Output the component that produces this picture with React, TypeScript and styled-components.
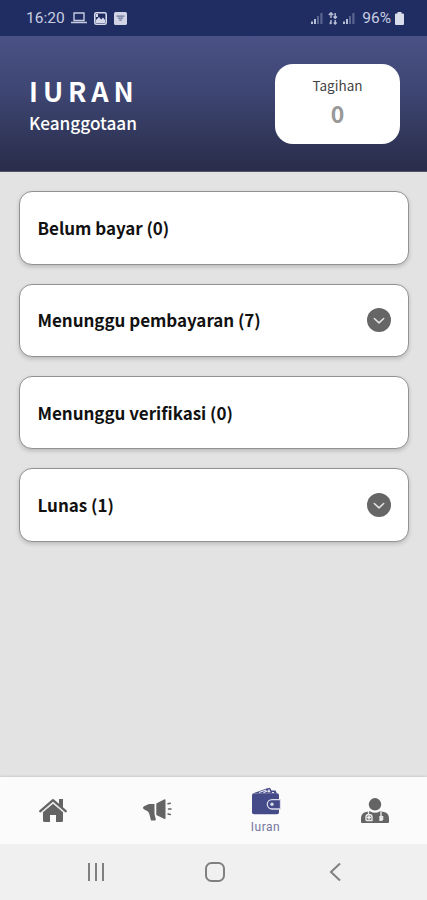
import React from "react";
import styled, { createGlobalStyle } from "styled-components";

const GlobalStyle = createGlobalStyle`
  * { box-sizing: border-box; }
  body { margin: 0; background: #e3e3e3; }
`;

const Screen = styled.div`
  width: 427px;
  height: 900px;
  display: flex;
  flex-direction: column;
  overflow: hidden;
  background: #e3e3e3;
  font-family: "Noto Sans CJK JP", "Noto Sans", sans-serif;
`;

const StatusBar = styled.div`
  height: 36px;
  flex: none;
  display: flex;
  align-items: center;
  justify-content: space-between;
  padding: 0 23px 0 26px;
  background: #202d62;
  color: #c9cde0;
  font: 15.5px/36px Roboto, sans-serif;
`;

const StatusGroup = styled.div<{ $gap: number }>`
  display: flex;
  align-items: center;
  gap: ${(p) => p.$gap}px;
  svg { display: block; }
`;

const Clock = styled.span`
  margin-right: -1px;
`;

const Battery = styled.span`
  margin: 0 -1px 0 2px;
`;

const Header = styled.header`
  height: 136px;
  flex: none;
  display: flex;
  justify-content: space-between;
  padding: 28px 27px 0 29px;
  background: linear-gradient(#4a5186, #3e4673 40%, #292d4a);
  border-bottom: 1px solid #51556b;
`;

const Heading = styled.div`
  color: #fff;
  padding-top: 10px;
`;

const Title = styled.h1`
  margin: 0;
  font-size: 27px;
  line-height: 33px;
  font-weight: 700;
  letter-spacing: 5px;
`;

const Subtitle = styled.div`
  font-size: 17.2px;
  line-height: 26px;
  font-weight: 500;
  margin-top: 3px;
`;

const BillCard = styled.div`
  width: 125px;
  height: 80px;
  border-radius: 18px;
  background: #fff;
  text-align: center;
  padding-top: 11px;
`;

const BillLabel = styled.div`
  font-size: 13.5px;
  line-height: 20px;
  color: #444;
`;

const BillValue = styled.div`
  font-size: 23px;
  line-height: 36px;
  font-weight: 700;
  color: #999;
`;

const List = styled.main`
  flex: 1;
  display: flex;
  flex-direction: column;
  gap: 18.9px;
  padding: 19.2px 18px 0 19px;
`;

const Row = styled.section`
  height: 73.5px;
  display: flex;
  align-items: center;
  justify-content: space-between;
  padding: 0 17px 0 18px;
  border: 1px solid #929292;
  border-radius: 13px;
  background: #fff;
  box-shadow: 0 2px 4px rgba(0, 0, 0, 0.18);
`;

const RowLabel = styled.span`
  font-size: 17px;
  line-height: 26px;
  font-weight: 700;
  color: #111;
  letter-spacing: -0.03px;
  margin-left: -0.5px;
`;

const Expand = styled.button`
  width: 24px;
  height: 24px;
  padding: 0;
  border: 0;
  border-radius: 50%;
  background: #666;
  svg { display: block; }
`;

const TabBar = styled.nav`
  height: 67px;
  flex: none;
  display: grid;
  grid-template-columns: 105px 104px 113px 105px;
  justify-content: center;
  background: #fbfbfb;
  box-shadow: 0 -1px 2px rgba(0, 0, 0, 0.1);
`;

const Tab = styled.div<{ $active?: boolean }>`
  display: flex;
  flex-direction: column;
  align-items: center;
  padding-top: ${(p) => (p.$active ? 10 : 21)}px;
  color: ${(p) => (p.$active ? "#454b88" : "#646464")};
  svg { display: block; }
`;

const TabLabel = styled.span`
  font: 12px/16px Roboto, sans-serif;
  letter-spacing: 0.5px;
  color: #7576a0;
  margin-top: 4px;
`;

const SystemBar = styled.div`
  height: 56px;
  flex: none;
  display: grid;
  grid-template-columns: repeat(3, 119.5px);
  justify-content: center;
  align-items: center;
  justify-items: center;
  padding-left: 3px;
  background: #f0f0f0;
  svg { display: block; }
`;

const LaptopIcon = () => (
  <svg width="16" height="14" viewBox="0 0 16 14" fill="none" stroke="#c5cae0" strokeWidth="1.4">
    <path d="M3 2h10v7.5H3zM0 11.5h16" />
  </svg>
);
const PhotoIcon = () => (
  <svg width="13" height="13" viewBox="0 0 13 13">
    <rect x=".8" y=".8" width="11.4" height="11.4" rx="1.5" fill="none" stroke="#d5d9ea" strokeWidth="1.6" />
    <path d="M2 11V8l3-3 2.2 2.5L9 5.6 11 8v3zM2 2h2v3H2z" fill="#d5d9ea" />
  </svg>
);
const AppIcon = () => (
  <svg width="13" height="13" viewBox="0 0 13 13">
    <rect width="13" height="13" rx="1.6" fill="#d0d4e5" />
    <path d="M2.5 4.2h8M4 6.2h5M5.2 8.2h2.6" stroke="#6c759b" strokeWidth="1.3" />
  </svg>
);
const SignalIcon = () => (
  <svg width="12" height="12" viewBox="0 0 12 12">
    <path d="M0 9.5h2V12H0zM3 7h2v5H3z" fill="#b6bdd5" />
    <path d="M6 4h2v8H6zM9.3 1H11.5v11H9.3z" fill="#59648f" />
  </svg>
);
const DataIcon = () => (
  <svg width="10" height="13" viewBox="0 0 10 13" fill="none" stroke="#bac0d8" strokeWidth="1.4">
    <path d="M3 .8V6M.8 3 3 .8 5.2 3M7.2 1v5M5.5 4.5 7.2 6.2 9 4.5M3 8v4M7.2 8v4M1.7 10.5 3 12M5.8 10.5l1.4 1.5 1.5-1.5" />
  </svg>
);
const BatteryIcon = () => (
  <svg width="9" height="13" viewBox="0 0 9 13">
    <path d="M2.5 0h4v1.5H8q1 0 1 1V12q0 1-1 1H1q-1 0-1-1V2.5q0-1 1-1h1.5z" fill="#d9dcea" />
  </svg>
);
const ChevronIcon = () => (
  <svg width="24" height="24" viewBox="0 0 24 24" fill="none" stroke="#e4e4e4" strokeWidth="1.5" strokeLinecap="round" strokeLinejoin="round">
    <path d="m7.3 10.5 4.7 4.4 4.7-4.4" />
  </svg>
);
const HomeIcon = () => (
  <svg width="28" height="25" viewBox="0 0 28 25">
    <path d="M20 1h4v9l-4-3.5z" fill="currentColor" />
    <path d="M4 14.2 14 5.8l10 8.4v8.3q0 1.500-1.500 1.500H17v-7h-6v7H5.500Q4 24 4 22.500z" fill="currentColor" />
    <path d="m2.500 14.800 11.500-10 11.500 10" fill="none" stroke="#dcdcdc" strokeWidth=".8" />
    <path d="m1.300 13.200 12.700-11 12.700 11" fill="none" stroke="currentColor" strokeWidth="2.300" strokeLinecap="round" strokeLinejoin="round" />
  </svg>
);
const MegaphoneIcon = () => (
  <svg width="29" height="23" viewBox="0 0 29 23" fill="currentColor">
    <path d="M6 6h5.500v10l1.300 5.500q0 1-1 1H8L6.200 15.500 5 13.500 1.300 11.500Q0 11 0 9.800q0-1.300 1.500-1.800zM13.300 5.500 21 1.500q1.500-.7 1.500 1v17.500q0 1.500-1.500.8L13.300 17z" />
    <path d="m25 5.800 2.300-.6M25.500 11h2.500M25 16l2.300.6" fill="none" stroke="currentColor" strokeWidth="1.500" strokeLinecap="round" />
  </svg>
);
const WalletIcon = () => (
  <svg width="30" height="28" viewBox="0 0 30 28">
    <path d="M3 6 15.500 1.500 19 .7 20.500 3.500h4L26 6.500z" fill="currentColor" />
    <path d="m8 5.500 7-2.500M12.500 5.700l4-2M17 5.500l1-2.500 1 2.500M21 5.500h2" stroke="#e9eaf4" strokeWidth="1.100" />
    <rect x="1" y="6.200" width="27" height="21" rx="2" fill="currentColor" />
    <path d="M29.500 12.600H21a4.700 4.700 0 0 0 0 9.400h8.500z" fill="currentColor" stroke="#dadcec" strokeWidth="1.300" />
    <circle cx="21" cy="17.300" r="1.700" fill="#d6d8eb" />
  </svg>
);
const DoctorIcon = () => (
  <svg width="30" height="26" viewBox="0 0 30 26">
    <circle cx="15" cy="6.300" r="6.200" fill="currentColor" />
    <path d="M1 24v-3.500q0-5.500 5-6.500 3-.7 4-.8 5 3 10 0 1 .1 4 .8 5 1 5 6.500V24q0 1-1 1H2q-1 0-1-1z" fill="currentColor" />
    <path d="M8.500 13v3M6 22.500V19q0-2.500 3-2.500t3 2.500v3.500H6" fill="none" stroke="#e8e8e8" strokeWidth="1.400" />
    <path d="M9 17.500v4M7 19.500h4" stroke="#f4f4f4" strokeWidth="1.500" />
    <path d="M21 13.500v5" stroke="#e8e8e8" strokeWidth="1.400" />
    <path d="M19.300 18h4v3.500l-1.300 1.500h-2.700z" fill="#e8e8e8" />
  </svg>
);
const RecentsIcon = () => (
  <svg width="20" height="20" viewBox="0 0 20 20" stroke="#808080" strokeWidth="2">
    <path d="M3 1v18M10 1v18M17 1v18" />
  </svg>
);
const HomeButtonIcon = () => (
  <svg width="20" height="20" viewBox="0 0 20 20" fill="none" stroke="#808080" strokeWidth="2">
    <rect x="1" y="1" width="18" height="18" rx="5.500" />
  </svg>
);
const BackIcon = () => (
  <svg width="12" height="20" viewBox="0 0 12 20" fill="none" stroke="#808080" strokeWidth="2">
    <path d="m11 1.500-9 8.500 9 8.500" />
  </svg>
);

const groups = [
  { label: "Belum bayar (0)", expandable: false },
  { label: "Menunggu pembayaran (7)", expandable: true },
  { label: "Menunggu verifikasi (0)", expandable: false },
  { label: "Lunas (1)", expandable: true },
];

export default function App() {
  return (
    <>
      <GlobalStyle />
      <Screen>
        <StatusBar>
          <StatusGroup $gap={7}>
            <Clock>16:20</Clock>
            <LaptopIcon />
            <PhotoIcon />
            <AppIcon />
          </StatusGroup>
          <StatusGroup $gap={5}>
            <SignalIcon />
            <DataIcon />
            <SignalIcon />
            <Battery>96%</Battery>
            <BatteryIcon />
          </StatusGroup>
        </StatusBar>
        <Header>
          <Heading>
            <Title>IURAN</Title>
            <Subtitle>Keanggotaan</Subtitle>
          </Heading>
          <BillCard>
            <BillLabel>Tagihan</BillLabel>
            <BillValue>0</BillValue>
          </BillCard>
        </Header>
        <List>
          {groups.map((g) => (
            <Row key={g.label}>
              <RowLabel>{g.label}</RowLabel>
              {g.expandable && (
                <Expand aria-label={g.label}>
                  <ChevronIcon />
                </Expand>
              )}
            </Row>
          ))}
        </List>
        <TabBar>
          <Tab><HomeIcon /></Tab>
          <Tab><MegaphoneIcon /></Tab>
          <Tab $active>
            <WalletIcon />
            <TabLabel>Iuran</TabLabel>
          </Tab>
          <Tab><DoctorIcon /></Tab>
        </TabBar>
        <SystemBar>
          <RecentsIcon />
          <HomeButtonIcon />
          <BackIcon />
        </SystemBar>
      </Screen>
    </>
  );
}
